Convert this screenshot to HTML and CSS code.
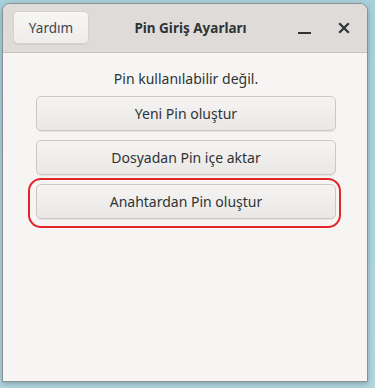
FILE: index.html
```html
<!DOCTYPE html>
<html lang="tr">

<head>
    <meta charset="UTF-8">
    <meta name="viewport" content="width=device-width, initial-scale=1.0">
    <title>Pin Giriş Ayarları</title>
    <link rel="stylesheet" href="styles.css">
</head>

<body>
    <div class="window">
        <div class="header">
            <button class="help">Yardım</button>
            <h1>Pin Giriş Ayarları</h1>
            <div class="controls">
                <span class="min"></span>
                <svg class="close" width="12" height="12" viewBox="0 0 12 12">
                    <path d="M2 2 L10 10 M10 2 L2 10" stroke="#2e3436" stroke-width="2.2" stroke-linecap="square" />
                </svg>
            </div>
        </div>
        <div class="content">
            <p class="status">Pin kullanılabilir değil.</p>
            <button class="btn">Yeni Pin oluştur</button>
            <button class="btn">Dosyadan Pin içe aktar</button>
            <div class="marked">
                <button class="btn">Anahtardan Pin oluştur</button>
            </div>
        </div>
    </div>
</body>

</html>
```

FILE: styles.css
```css
* {
    margin: 0;
    padding: 0;
    box-sizing: border-box;
}

body {
    width: 375px;
    height: 388px;
    background: linear-gradient(#a8d0d9, #b2d6de);
    font-family: "Noto Sans", "DejaVu Sans", sans-serif;
    color: #2e3436;
    overflow: hidden;
}

.window {
    margin: 3px 0 0 2px;
    width: 366px;
    height: 379px;
    background-color: #f6f5f4;
    border: 1px solid #8a9094;
    border-radius: 8px 8px 0 0;
    box-shadow: 0 2px 5px rgba(40, 70, 80, .35);
    display: flex;
    flex-direction: column;
    overflow: hidden;
}

.header {
    height: 49px;
    background-color: #dfdbd8;
    border-bottom: 1px solid #c8c3be;
    display: flex;
    align-items: center;
    padding: 0 17px 0 10px;
    position: relative;
}

.help {
    width: 76px;
    height: 33px;
    margin-top: -1px;
    font-family: inherit;
    font-size: 13.5px;
    color: #3d4548;
    background: linear-gradient(#f7f6f5, #efedeb);
    border: 1px solid #d6d1cc;
    border-radius: 5px;
    box-shadow: 0 1px 1px rgba(0, 0, 0, .06);
}

.header h1 {
    flex: 1;
    text-align: center;
    font-size: 13.5px;
    font-weight: bold;
    color: #2e3436;
    margin-right: 6px;
}

.controls {
    display: flex;
    align-items: center;
    gap: 27px;
}

.min {
    width: 13px;
    height: 2px;
    background-color: #2e3436;
    margin-top: 10px;
}

.close {
    display: block;
    margin-top: -1px;
}

.content {
    display: flex;
    flex-direction: column;
    padding: 16px 31px 0 33px;
}

.status {
    text-align: center;
    font-size: 14px;
    line-height: 20px;
    margin-bottom: 7px;
}

.btn {
    width: 100%;
    height: 35px;
    font-family: inherit;
    font-size: 14px;
    color: #2e3436;
    background: linear-gradient(#f5f4f2, #eae8e6);
    border: 1px solid #cdc7c2;
    border-radius: 5px;
    box-shadow: 0 1px 1px rgba(0, 0, 0, .07);
    margin-bottom: 9px;
}

/* kırmızı işaret */
.marked {
    position: relative;
}

.marked::after {
    content: "";
    position: absolute;
    left: -8px;
    right: -5px;
    top: -6px;
    bottom: 0px;
    border: 2px solid #e3252b;
    border-radius: 13px;
}
```
